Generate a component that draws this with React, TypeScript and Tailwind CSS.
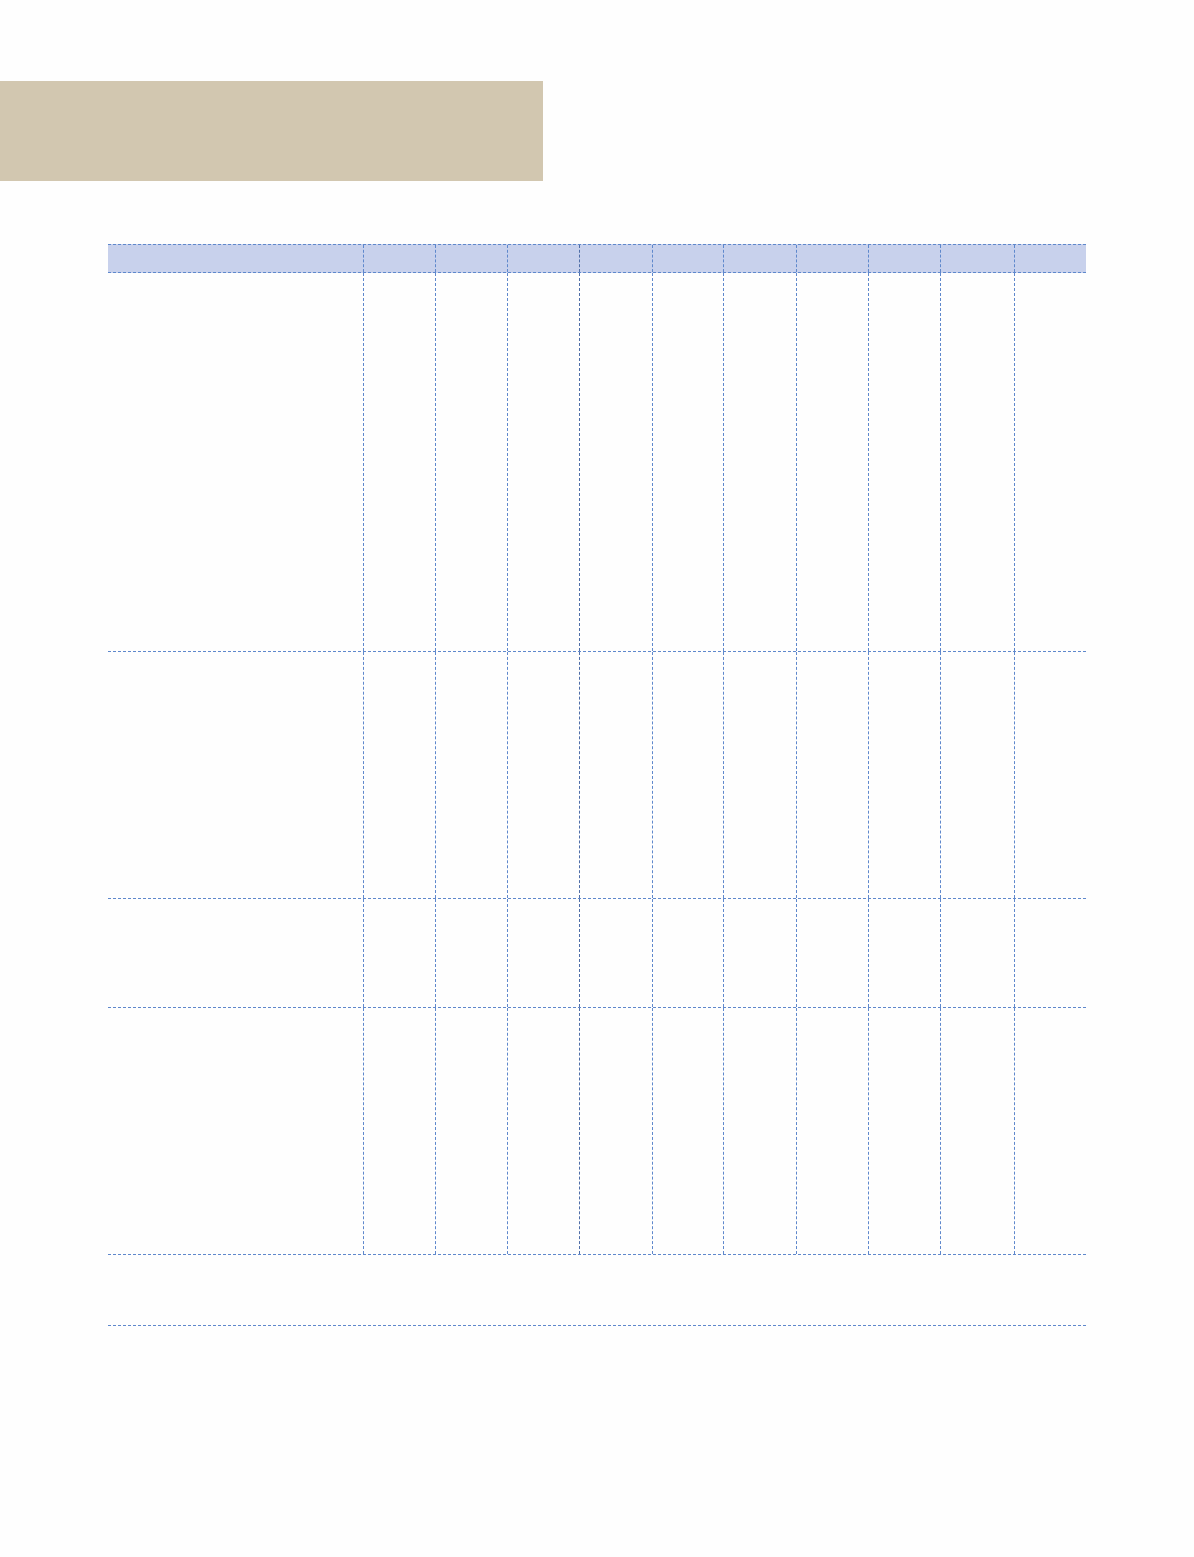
import React from 'react'

const colWidths = [72, 72, 72, 73, 71, 73, 72, 72, 74, 72]

const bodyRows = [379, 247, 109, 247]

function Row({ height, header = false }: { height: number; header?: boolean }) {
    return (
        <div
            className={`flex border-b border-dashed border-[#5f88cc] ${header ? 'bg-[#c8d1ec] border-t' : ''}`}
            style={{ height }}
        >
            <div className="w-[255px] shrink-0" />
            {colWidths.map((w, i) => (
                <div
                    key={i}
                    className={`shrink-0 border-l border-dashed ${i === 3 ? 'border-[#4f6ea8]' : 'border-[#5f88cc]'}`}
                    style={{ width: w }}
                />
            ))}
        </div>
    )
}

export default function App() {
    return (
        <div className="min-h-[1557px] w-[1194px] bg-[#fefefe] font-['Liberation_Sans',sans-serif]">
            <div className="h-[81px]" />
            <div className="h-[100px] w-[543px] bg-[#d2c7b0]" />
            <div className="pl-[108px] pt-[63px]">
                <div className="w-[978px]">
                    <Row height={29} header />
                    {bodyRows.map((h, i) => (
                        <Row key={i} height={h} />
                    ))}
                    <div className="h-[71px] border-b border-dashed border-[#5f88cc]" />
                </div>
            </div>
        </div>
    )
}
